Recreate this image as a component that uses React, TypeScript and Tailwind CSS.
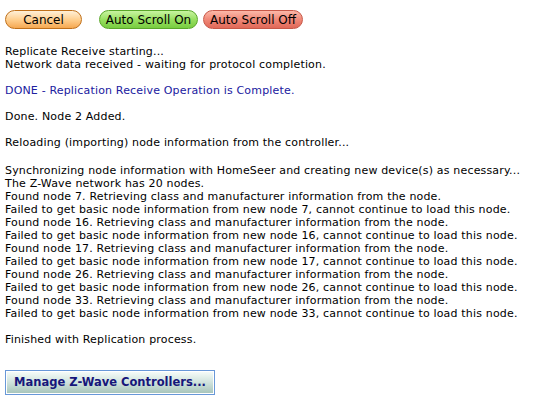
import React from 'react';

const lines: string[] = [
  'Synchronizing node information with HomeSeer and creating new device(s) as necessary...',
  'The Z-Wave network has 20 nodes.',
  'Found node 7. Retrieving class and manufacturer information from the node.',
  'Failed to get basic node information from new node 7, cannot continue to load this node.',
  'Found node 16. Retrieving class and manufacturer information from the node.',
  'Failed to get basic node information from new node 16, cannot continue to load this node.',
  'Found node 17. Retrieving class and manufacturer information from the node.',
  'Failed to get basic node information from new node 17, cannot continue to load this node.',
  'Found node 26. Retrieving class and manufacturer information from the node.',
  'Failed to get basic node information from new node 26, cannot continue to load this node.',
  'Found node 33. Retrieving class and manufacturer information from the node.',
  'Failed to get basic node information from new node 33, cannot continue to load this node.',
];

export default function App() {
  return (
    <div className="w-[544px] h-[409px] bg-white text-black text-[11px] leading-[13px] tracking-[0.17px] font-['DejaVu_Sans',Verdana,sans-serif] pl-[5px] pt-[10px]">
      {/* barra de botones */}
      <div className="flex items-center tracking-normal">
        <button className="w-[77px] h-[19px] rounded-full border border-[#c0701a] bg-gradient-to-b from-[#fff0d8] via-[#ffd090] to-[#f5a850] text-[12px] leading-none text-black">
          Cancel
        </button>
        <button className="ml-[17px] w-[99px] h-[19px] rounded-full border border-[#5aa82a] bg-gradient-to-b from-[#c8f4a0] via-[#98e060] to-[#78cc40] text-[12px] leading-none text-black">
          Auto Scroll On
        </button>
        <button className="ml-[5px] w-[100px] h-[19px] rounded-full border border-[#c85848] bg-gradient-to-b from-[#fbb8a8] via-[#f08878] to-[#e06858] text-[12px] leading-none text-black">
          Auto Scroll Off
        </button>
      </div>

      <div className="mt-[16px]">
        <div>Replicate Receive starting...</div>
        <div>Network data received - waiting for protocol completion.</div>
        <div className="mt-[13px] text-[#2020a0]">DONE - Replication Receive Operation is Complete.</div>
        <div className="mt-[13px]">Done. Node 2 Added.</div>
        <div className="mt-[13px]">Reloading (importing) node information from the controller...</div>
        <div className="mt-[15px]">
          {lines.map((l) => (
            <div key={l}>{l}</div>
          ))}
        </div>
        <div className="mt-[13px]">Finished with Replication process.</div>
      </div>

      <div className="mt-[24px] tracking-normal">
        <button className="w-[210px] h-[25px] border border-[#6898d8] p-[1px] bg-white">
          <span className="flex h-full w-full items-center justify-center bg-gradient-to-b from-[#f4fbf8] via-[#cfe2dc] to-[#a9c6bc] text-[11.5px] font-bold text-[#16167a]">
            Manage Z-Wave Controllers...
          </span>
        </button>
      </div>
    </div>
  );
}
